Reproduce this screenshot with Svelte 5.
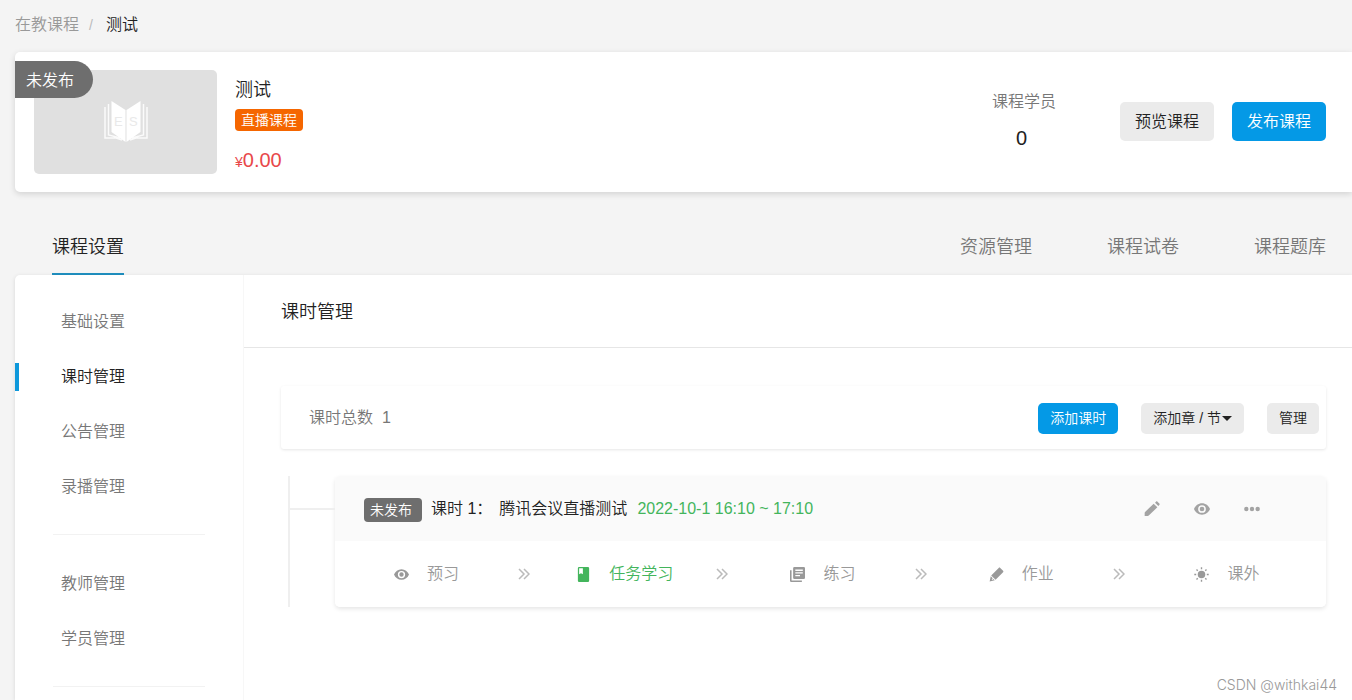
<script>
  const tabs = ['资源管理', '课程试卷', '课程题库'];
  const groups = [
    ['基础设置', '课时管理', '公告管理', '录播管理'],
    ['教师管理', '学员管理'],
    []
  ];
  const steps = [
    { name: '预习', icon: 'eye' },
    { name: '任务学习', icon: 'book', active: true },
    { name: '练习', icon: 'library' },
    { name: '作业', icon: 'marker' },
    { name: '课外', icon: 'sun' }
  ];
  const actions = [
    { label: '编辑', icon: 'pencil' },
    { label: '预览', icon: 'eye' },
    { label: '更多', icon: 'more' }
  ];
  let current = $state('课时管理');
</script>

{#snippet icon(name)}
  <svg class="icon" viewBox="0 0 24 24" aria-hidden="true">
    {#if name === 'eye'}
      <path fill-rule="evenodd" d="M12 3.500C6.500 3.500 2 7 0 12c2 5 6.500 8.500 12 8.500S22 17 24 12C22 7 17.500 3.500 12 3.500zM12 17.800a5.800 5.800 0 1 1 0-11.600 5.800 5.800 0 0 1 0 11.600zM12 8.500a3.500 3.500 0 1 0 0 7 3.500 3.500 0 0 0 0-7z" />
    {:else if name === 'book'}
      <path fill-rule="evenodd" d="M5 0h14a2 2 0 0 1 2 2v20a2 2 0 0 1-2 2H5a2 2 0 0 1-2-2V2a2 2 0 0 1 2-2zM5 2v9.500l3-1.500 3 1.500V2z" />
    {:else if name === 'library'}
      <path d="M0 5h2.500v16.500H19V24H2a2 2 0 0 1-2-2z" />
      <path fill-rule="evenodd" d="M7 0h15a2 2 0 0 1 2 2v15a2 2 0 0 1-2 2H7a2 2 0 0 1-2-2V2a2 2 0 0 1 2-2zM8.500 4v2.200h12V4zM8.500 8.300v2.200h12V8.300zM8.500 12.600v2.200h7.500v-2.200z" />
    {:else if name === 'marker'}
      <path d="M15.500 1.500c.8-.8 1.700-.8 2.500 0l4.500 4.500c.8.8.8 1.700 0 2.500L10.500 20.500 3.500 13.500zM2.800 14.800 6 18l-1.800 1.800 1 1L7 19l2.200 2.200L1 23z" />
    {:else if name === 'sun'}
      <circle cx="12" cy="12" r="6" />
      <path d="M12 0.500v3M12 20.500v3M0.500 12h3M20.500 12h3M4 4l2 2M18 18l2 2M4 20l2-2M18 6l2-2" stroke="currentColor" stroke-width="2.200" />
    {:else if name === 'pencil'}
      <path d="M14.500 4 20 9.500 7.500 21.500c-.6.6-1.200 1-2 1H1V18c0-.8.4-1.400 1-2zM16.500 2.500l1.500-1.500c.7-.7 1.500-.7 2.200 0l2.800 2.800c.7.7.7 1.500 0 2.200l-1.500 1.500z" />
    {:else if name === 'more'}
      <circle cx="3.500" cy="12" r="3.300" /><circle cx="12" cy="12" r="3.300" /><circle cx="20.500" cy="12" r="3.300" />
    {/if}
  </svg>
{/snippet}

<div class="page">
  <nav class="crumbs" aria-label="路径">
    <a href="#courses">在教课程</a><span class="slash">/</span><span class="here">测试</span>
  </nav>

  <header class="course">
    <span class="ribbon">未发布</span>
    <div class="cover">
      <svg viewBox="0 0 44 42" aria-hidden="true">
        <g fill="none" stroke="#fff" stroke-width="1.500" opacity="0.85">
          <path d="M1 6v31h11l6 2M43 6v31H32l-6 2M4.500 3v31l12 3M39.500 3v31l-12 3" />
        </g>
        <path d="M7.500 0 21.500 9v32L7.500 31zM36.500 0l-14 9v32l14-10z" fill="#fff" />
        <g fill="#e9e9e9" font-family="Liberation Sans, sans-serif" font-size="13">
          <text x="10" y="25">E</text><text x="25" y="25">S</text>
        </g>
      </svg>
    </div>
    <div class="info">
      <h1>测试</h1>
      <span class="kind">直播课程</span>
      <div class="price"><small>¥</small>0.00</div>
    </div>
    <div class="stat"><span>课程学员</span><strong>0</strong></div>
    <div class="buttons">
      <button class="btn">预览课程</button>
      <button class="btn primary">发布课程</button>
    </div>
  </header>

  <nav class="tabs" aria-label="课程">
    <a class="on" href="#settings">课程设置</a>
    {#each tabs as tab}<a href="#{tab}">{tab}</a>{/each}
  </nav>

  <div class="panel">
    <aside>
      {#each groups as group, i}
        {#if i > 0}<hr />{/if}
        {#each group as item}
          <a href="#{item}" class:on={item === current} onclick={() => (current = item)}>{item}</a>
        {/each}
      {/each}
    </aside>
    <main>
      <h2>课时管理</h2>
      <div class="content">
        <div class="toolbar">
          <span class="total">课时总数&nbsp; 1</span>
          <button class="btn small primary">添加课时</button>
          <button class="btn small">添加章 / 节<i class="caret"></i></button>
          <button class="btn small">管理</button>
        </div>
        <div class="tree">
          <article>
            <div class="lesson">
              <span class="tag">未发布</span>
              <span class="name">课时 1：</span>
              <span class="title">腾讯会议直播测试</span>
              <time>2022-10-1 16:10 ~ 17:10</time>
              <div class="actions">
                {#each actions as action}
                  <button aria-label={action.label}>{@render icon(action.icon)}</button>
                {/each}
              </div>
            </div>
            <div class="steps">
              {#each steps as step, i}
                <div class="step">
                  <a href="#{step.name}" class:active={step.active}>{@render icon(step.icon)}{step.name}</a>
                  {#if i < steps.length - 1}
                    <svg class="next" viewBox="0 0 12 12" aria-hidden="true"><path d="M1 1l5 5-5 5M6 1l5 5-5 5" /></svg>
                  {/if}
                </div>
              {/each}
            </div>
          </article>
        </div>
      </div>
    </main>
  </div>
  <div class="mark">CSDN @withkai44</div>
</div>

<style>
  :global(body) {
    background: #f4f4f4;
  }
  .page {
    box-sizing: border-box;
    min-height: 100vh;
    padding-left: 15px;
    display: flex;
    flex-direction: column;
    overflow: hidden;
    position: relative;
    font: 350 16px/24px "Liberation Sans", "Noto Sans CJK SC", sans-serif;
    color: #222;
  }
  .page :global(*) {
    box-sizing: border-box;
  }
  a {
    color: inherit;
    text-decoration: none;
  }
  h1, h2 {
    margin: 0;
    font-size: 18px;
    font-weight: 350;
  }
  .icon {
    display: block;
    width: 16px;
    height: 16px;
    fill: currentColor;
  }
  .crumbs {
    display: flex;
    padding: 13px 0 15px;
    color: #999;
  }
  .slash {
    padding: 0 13px 0 10px;
    font-size: 14px;
    color: #bbb;
  }
  .here {
    color: #222;
  }
  .course {
    position: relative;
    display: flex;
    align-items: center;
    padding: 18px 26px 18px 19px;
    background: #fff;
    border-radius: 5px 0 0 5px;
    box-shadow: 0 2px 6px rgba(0, 0, 0, 0.14);
  }
  .ribbon {
    position: absolute;
    left: 0;
    top: 9px;
    padding: 2px 19px 0 11px;
    line-height: 35px;
    border-radius: 0 19px 19px 0;
    background: #6e6e6e;
    color: #fff;
  }
  .cover {
    display: flex;
    align-items: center;
    justify-content: center;
    width: 183px;
    height: 104px;
    border-radius: 5px;
    background: #e0e0e0;
  }
  .cover svg {
    width: 44px;
    height: 42px;
  }
  .info {
    flex: 1;
    display: flex;
    flex-direction: column;
    align-items: flex-start;
    padding: 6px 0 0 18px;
  }
  .info h1 {
    line-height: 28px;
  }
  .kind {
    margin: 5px 0 15px;
    padding: 0 6px;
    border-radius: 4px;
    background: #f56600;
    color: #fff;
    font-size: 14px;
    line-height: 22px;
  }
  .price {
    font-size: 20px;
    line-height: 28px;
    color: #e8484a;
  }
  .price small {
    font-size: 14px;
    line-height: 14px;
  }
  .stat {
    display: flex;
    flex-direction: column;
    gap: 12px;
    padding: 0 64px 4px 0;
    color: #777;
  }
  .stat strong {
    padding-right: 5px;
    text-align: center;
    font-size: 20px;
    font-weight: 350;
    color: #222;
  }
  .buttons {
    display: flex;
    gap: 18px;
    padding-bottom: 1px;
  }
  .btn {
    display: inline-flex;
    align-items: center;
    padding: 0 15px;
    border: 0;
    border-radius: 5px;
    background: #ebebeb;
    color: #222;
    font: inherit;
    line-height: 39px;
  }
  .btn.primary {
    background: #0499e6;
    color: #fff;
  }
  .btn.small {
    padding: 0 12px;
    font-size: 14px;
    line-height: 31px;
  }
  .tabs {
    display: flex;
    justify-content: flex-end;
    gap: 75px;
    padding: 29px 26px 0 37px;
    font-size: 18px;
    color: #777;
  }
  .tabs a {
    line-height: 52px;
    border-bottom: 2px solid transparent;
  }
  .tabs .on {
    margin-right: auto;
    color: #222;
    border-color: #1f8fc0;
  }
  .panel {
    flex: 1;
    display: flex;
    background: #fff;
    border-top-left-radius: 5px;
    box-shadow: 0 1px 4px rgba(0, 0, 0, 0.12);
  }
  aside {
    width: 229px;
    padding-top: 19px;
    border-right: 1px solid #f7f7f7;
    color: #777;
  }
  aside a {
    display: flex;
    align-items: center;
    height: 55px;
    padding-left: 46px;
    position: relative;
  }
  aside .on {
    color: #222;
  }
  aside .on::before {
    content: "";
    position: absolute;
    left: 0;
    width: 4px;
    height: 28px;
    background: #0e98db;
  }
  hr {
    height: 1px;
    margin: 20px 38px 21px 38px;
    border: 0;
    background: #f2f2f2;
  }
  hr:last-child {
    margin-bottom: 0;
  }
  main {
    flex: 1;
    min-width: 0;
  }
  h2 {
    padding: 2px 0 0 37px;
    line-height: 70px;
    border-bottom: 1px solid #e6e6e6;
  }
  .content {
    padding: 38px 26px 38px 37px;
  }
  .toolbar {
    display: flex;
    align-items: center;
    gap: 23px;
    padding: 16px 7px 15px 28px;
    border-radius: 3px;
    box-shadow: 0 1px 3px rgba(0, 0, 0, 0.1);
  }
  .total {
    flex: 1;
    line-height: 32px;
    color: #777;
  }
  .caret {
    margin-left: 1px;
    border: 5px solid transparent;
    border-top-color: #222;
    border-bottom: 0;
  }
  .tree {
    position: relative;
    margin: 27px 0 0 7px;
    padding-left: 45px;
    border-left: 2px solid #efefef;
  }
  .tree::before {
    content: "";
    position: absolute;
    left: 0;
    top: 32px;
    width: 45px;
    height: 2px;
    background: #efefef;
  }
  article {
    border-radius: 5px;
    overflow: hidden;
    box-shadow: 0 2px 4px rgba(0, 0, 0, 0.1);
  }
  .lesson {
    display: flex;
    align-items: center;
    height: 65px;
    padding: 0 66px 0 29px;
    background: #fafafa;
  }
  .tag {
    margin: 2px 9px 0 0;
    padding: 0 10px 0 6px;
    border-radius: 4px;
    background: #6e6e6e;
    color: #fff;
    font-size: 14px;
    line-height: 24px;
  }
  .name {
    margin-right: 7px;
  }
  time {
    margin-left: 10px;
    color: #43b55c;
  }
  .actions {
    display: flex;
    gap: 34px;
    margin-left: auto;
    color: #a3a3a3;
  }
  .actions button {
    padding: 0;
    border: 0;
    background: none;
    color: inherit;
  }
  .steps {
    display: grid;
    grid-template-columns: repeat(5, 1fr);
    height: 66px;
    background: #fff;
    color: #999;
  }
  .step {
    display: flex;
    align-items: center;
  }
  .step a {
    flex: 1;
    display: flex;
    align-items: center;
    justify-content: center;
    gap: 18px;
  }
  .step .icon {
    width: 15px;
    height: 15px;
  }
  .step .active {
    color: #43b55c;
  }
  .next {
    width: 12px;
    height: 12px;
    margin-right: 3px;
    fill: none;
    stroke: #bbb;
    stroke-width: 1.500;
  }
  .mark {
    position: absolute;
    right: 15px;
    bottom: 3px;
    color: #999;
    font-family: Inter, sans-serif;
    font-size: 14px;
  }
</style>
